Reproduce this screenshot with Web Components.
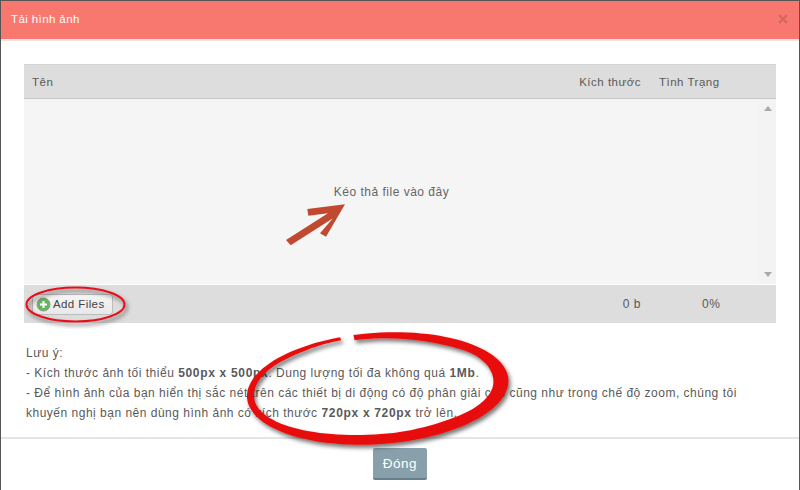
<!DOCTYPE html>
<html lang="vi"><head><meta charset="utf-8"><title>Tải hình ảnh</title>
<style>html,body{margin:0;padding:0;width:800px;height:490px;overflow:hidden;background:#fff}</style>
</head><body>
<x-modal>
  <x-modal-header slot="header">Tải hình ảnh</x-modal-header>
  <x-uploader></x-uploader>
  <x-notes></x-notes>
  <x-modal-footer slot="footer">Đóng</x-modal-footer>
  <x-annotations slot="overlay"></x-annotations>
</x-modal>
<script>
const FONT='"Liberation Sans",Arial,sans-serif';
function def(name,html){customElements.define(name,class extends HTMLElement{constructor(){super();this.attachShadow({mode:'open'}).innerHTML=html}})}
/* hand-drawn ring: a tilted ellipse whose stroke width varies along the way */
function ringPath(){
  const cx=377.7,cy=388.5,rx=131,ry=55.7,phi=-4*Math.PI/180;
  const tt=[[-99,5.3],[-45,9],[0,15],[45,12],[90,10],[180,7],[225,5],[255,3.2]];
  const t=a=>{for(let i=0;i<tt.length-1;i++){if(a<=tt[i+1][0]){const k=(a-tt[i][0])/(tt[i+1][0]-tt[i][0]),s=k*k*(3-2*k);return tt[i][1]+(tt[i+1][1]-tt[i][1])*s}}return tt[tt.length-1][1]};
  const pt=(a,d)=>{const r=a*Math.PI/180,x=(rx-d)*Math.cos(r),y=(ry-d)*Math.sin(r);return (cx+x*Math.cos(phi)-y*Math.sin(phi)).toFixed(1)+' '+(cy+x*Math.sin(phi)+y*Math.cos(phi)).toFixed(1)};
  const o=[],n=[];for(let a=-99;a<=255;a+=3){o.push(pt(a,0));n.unshift(pt(a,t(a)))}
  return 'M'+o.join('L')+'L'+n.join('L')+'Z';
}
def('x-modal',`<style>:host{display:flex;flex-direction:column;position:relative;box-sizing:border-box;width:800px;height:490px;background:#fff;border:solid #555;border-width:1px 1px 0 1px;font:12px ${FONT};letter-spacing:.5px;color:#5a5a5a}
main{display:block;flex:1;padding:23px 23px 0 23px}</style><slot name="header"></slot><main><slot></slot></main><slot name="footer"></slot><slot name="overlay"></slot>`);
def('x-modal-header',`<style>:host{display:flex;justify-content:space-between;align-items:center;box-sizing:border-box;height:40px;padding:0 11px 2px 10px;background:#f8786f;border-bottom:2px solid #f3e3e1;color:#fff;font-size:11.5px;letter-spacing:.4px}
svg{display:block}</style><slot></slot><svg width="10" height="10" viewBox="0 0 10 10"><path d="M1 1L9 9M9 1L1 9" stroke="#d8665e" stroke-width="2.4"/></svg>`);
def('x-uploader',`<style>:host{display:block}
.row{display:grid;grid-template-columns:1fr 75px 96px 39px;align-items:center;background:#ddd}
.head{height:33px;border-top:1px solid #d6d6d6;border-bottom:1px solid #c8c8c8;padding-left:8px;font-size:11.5px}
.head span,.foot span{white-space:nowrap}
.r{text-align:right}
.c{padding-left:18px}
.drop{display:flex;height:185px;background:#f5f5f5}
.area{flex:1;display:flex;justify-content:center;padding-top:86px;box-sizing:border-box;color:#666}
.sb{width:17px;background:#f3f3f3;display:flex;flex-direction:column;justify-content:space-between;align-items:center;padding:7px 0;box-sizing:border-box}
.up{border:4px solid transparent;border-top:0;border-bottom:5px solid #aaa;width:0;height:0}
.down{border:4px solid transparent;border-bottom:0;border-top:5px solid #aaa;width:0;height:0}
.foot{height:38px;padding-left:8px;border-top:1px solid #fff}
.foot .sz{text-align:right}
.foot .pc{padding-left:61px}
button{display:flex;align-items:center;gap:2px;box-sizing:border-box;width:81px;height:21px;margin:0;padding:0 0 0 3px;background:linear-gradient(#f6f6f6,#e8e8e8);border:1px solid #bdbdbd;border-radius:3px;font:inherit;font-size:11.5px;letter-spacing:.4px;color:#444}
svg{display:block;flex:none}
</style>
<div class="row head"><span>Tên</span><span class="r">Kích thước</span><span class="c">Tình Trạng</span><span></span></div>
<div class="drop"><div class="area">Kéo thả file vào đây</div><div class="sb"><i class="up"></i><i class="down"></i></div></div>
<div class="row foot"><span><button><svg width="15" height="15" viewBox="0 0 15 15"><circle cx="7.5" cy="7.5" r="6.5" fill="#6fb568" stroke="#8a9a86"/><circle cx="7.5" cy="7.5" r="5" fill="#62b45a"/><path d="M7.5 4v7M4 7.5h7" stroke="#fff" stroke-width="2.2"/></svg>Add Files</button></span><span class="sz">0 b</span><span class="pc">0%</span><span></span></div>`);
def('x-notes',`<style>:host{display:block;padding:20px 0 0 2px;line-height:20px;white-space:nowrap}b{font-weight:700;letter-spacing:.68px}p{margin:0}</style>
<p>Lưu ý:</p>
<p>- Kích thước ảnh tối thiểu <b>500px x 500px</b>. Dung lượng tối đa không quá <b>1Mb</b>.</p>
<p>- Để hình ảnh của bạn hiển thị sắc nét trên các thiết bị di động có độ phân giải cao cũng như trong chế độ zoom, chúng tôi</p>
<p>khuyến nghị bạn nên dùng hình ảnh có kích thước <b>720px x 720px</b> trở lên.</p>`);
def('x-modal-footer',`<style>:host{display:flex;justify-content:center;box-sizing:border-box;height:53px;padding:9px 0 0 0;border-top:2px solid #e5e5e5;flex:none}
button{box-sizing:border-box;width:54px;height:32px;background:#87a0ab;border:0;border-bottom:2px solid #66808b;border-radius:2px;color:#fff;font:13.5px ${FONT};letter-spacing:.5px;padding:0}</style><button><slot></slot></button>`);
def('x-annotations',`<style>:host{position:absolute;left:-1px;top:-1px;width:800px;height:490px;pointer-events:none}svg{display:block}</style>
<svg width="800" height="490" viewBox="0 0 800 490">
<defs><filter id="s" x="-10%" y="-10%" width="125%" height="130%"><feDropShadow dx="2" dy="3" stdDeviation="2.2" flood-color="#000" flood-opacity=".55"/></filter></defs>
<polygon fill="#c0492f" points="345,204.3 307.3,209 308.3,215.7 328,213.3 286,240 290.7,245.3 333,218.3 320,233.3 326,236.7"/>
<ellipse cx="75.5" cy="304.5" rx="49" ry="17" fill="none" stroke="#e8101a" stroke-width="2" filter="url(#s)"/>
<path filter="url(#s)" fill="#e81010" d="${ringPath()}"/>
</svg>`);
</script>
</body></html>
